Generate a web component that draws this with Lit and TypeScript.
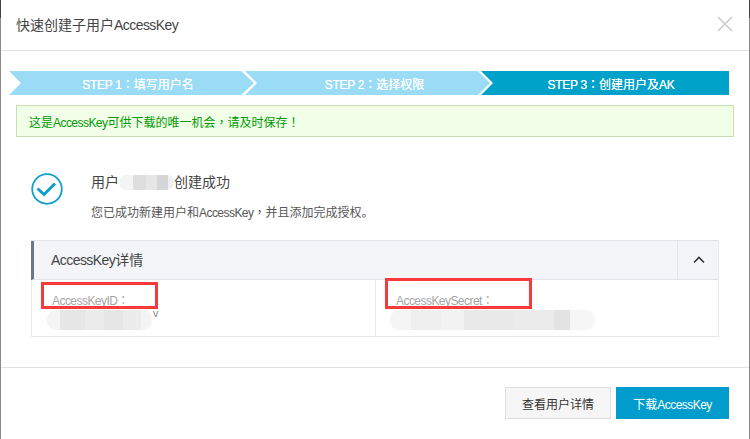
import { LitElement, html, css } from "lit";
import { customElement } from "lit/decorators.js";

@customElement("app-root")
export class AppRoot extends LitElement {
  static styles = css`
    :host {
      display: block;
      width: 750px;
      height: 439px;
      overflow: hidden;
      font-family: "Liberation Sans", "Noto Sans CJK SC", sans-serif;
      text-spacing-trim: space-all;
      color: #333;
      background: #fff;
    }
    .l { letter-spacing: -0.55px; }
    .c { font-family: "Noto Sans CJK TC", sans-serif; }
    .dialog {
      box-sizing: border-box;
      width: 750px;
      height: 439px;
      border-left: 1px solid #8a8a8a;
      border-right: 1px solid #8a8a8a;
      display: flex;
      flex-direction: column;
      background: #fff;
      position: relative;
    }
    .dialog::before, .dialog::after {
      content: "";
      position: absolute;
      top: 0;
      width: 1px;
      height: 18px;
      background: #444;
    }
    .dialog::before { left: -1px; }
    .dialog::after { right: -1px; }
    .head {
      height: 51px;
      flex: none;
      box-sizing: border-box;
      border-bottom: 1px solid #e1e1e1;
      display: flex;
      align-items: center;
      justify-content: space-between;
      padding: 0 15px 2px;
      font-size: 14px;
      color: #444;
    }
    .head svg { display: block; margin: 0 1px 0 0; }
    .body {
      flex: 1;
      padding: 20px 15px 0 8px;
      display: flex;
      flex-direction: column;
      min-height: 0;
    }
    .steps {
      display: flex;
      width: 720px;
      height: 24px;
      flex: none;
    }
    .step {
      box-sizing: border-box;
      height: 24px;
      flex: none;
      display: flex;
      align-items: center;
      justify-content: center;
      color: #fff;
      font-size: 12px;
      text-shadow: 0 0 0.6px #fff;
      background: #9adcf5;
    }
    .s1 { width: 245px; padding-left: 13px; clip-path: polygon(0 0, 232px 0, 245px 50%, 232px 100%, 0 100%, 12px 50%); }
    .s2 { width: 245px; padding-left: 14px; margin-left: -9px; clip-path: polygon(0 0, 233px 0, 245px 50%, 233px 100%, 0 100%, 12px 50%); }
    .s3 { width: 248px; padding-left: 12px; margin-left: -9px; background: #00a2ca; clip-path: polygon(0 0, 100% 0, 100% 100%, 0 100%, 12px 50%); }
    .step .l { letter-spacing: -0.3px; }
    .alert {
      box-sizing: border-box;
      margin: 10px 0 0 7px;
      width: 718px;
      height: 32px;
      flex: none;
      border: 1px solid #c8dfb4;
      background: #f1ffe9;
      color: #009a00;
      font-size: 12px;
      display: flex;
      align-items: center;
      padding-left: 12px;
    }
    .ok {
      margin: 36px 0 0 22px;
      display: flex;
      gap: 28px;
      height: 67px;
      flex: none;
    }
    .ok svg { display: block; }
    .ok-title {
      font-size: 14px;
      line-height: 20px;
      color: #444;
      display: flex;
      align-items: center;
      margin-top: -1px;
    }
    .blur1 {
      width: 55px;
      height: 15px;
      margin-top: 1px;
      border-radius: 7px;
      background: linear-gradient(90deg, #f4f4f4 0 25%, #dedede 25% 50%, #e6e6e6 50% 70%, #d6d6d6 70% 90%, #f0f0f0 90%);
    }
    .ok-sub { font-size: 12px; color: #555; margin-top: 12px; line-height: 16px; }
    .panel {
      box-sizing: border-box;
      margin-left: 22px;
      width: 688px;
      height: 97px;
      flex: none;
      border: 1px solid #e6e8ec;
      border-top: 1px solid #e1e4ea;
    }
    .p-head {
      height: 39px;
      box-sizing: border-box;
      background: #f3f5f9;
      border-left: 3px solid #6b7686;
      border-bottom: 1px solid #e1e4ea;
      margin-left: -1px;
      display: flex;
      align-items: center;
      justify-content: space-between;
      font-size: 14px;
      color: #444;
      padding-left: 17px;
    }
    .p-title { margin-bottom: 2px; }
    .toggle {
      width: 40px;
      height: 100%;
      border-left: 1px solid #e1e4ea;
      display: flex;
      align-items: center;
      justify-content: center;
    }
    .toggle svg { margin-left: 1px; }
    .cols { display: grid; grid-template-columns: 343px 1fr; height: 56px; }
    .col { padding: 12px 0 0 20px; position: relative; font-size: 12px; color: #a4a4a4; line-height: 16px; }
    .col + .col { border-left: 1px solid #e6e8ec; }
    .mark {
      position: absolute;
      box-sizing: border-box;
      left: 9px;
      border: 3px solid #f93a3a;
    }
    .a .mark { top: 2px; width: 117px; height: 27px; }
    .b .mark { top: -2px; width: 147px; height: 31px; }
    .smear {
      position: absolute;
      border-radius: 9px;
      height: 20px;
      top: 30px;
    }
    .a .smear { left: 15px; width: 105px; background: linear-gradient(90deg, #f4f4f4 0 12%, #e6e6e6 12% 36%, #ebebeb 36% 54%, #e6e6e6 54% 72%, #ececec 72% 90%, #f4f4f4 90%); }
    .b .smear { left: 14px; width: 205px; background: linear-gradient(90deg, #f5f5f5 0 10%, #efefef 10% 25%, #f2f2f2 25% 36%, #e9e9e9 36% 60%, #ebebeb 60% 80%, #e3e3e3 80% 88%, #f6f6f6 88%); }
    .tail { position: absolute; left: 121px; top: 25px; font-size: 11px; color: #888; }
    .foot {
      margin: 30px -15px 0 -8px;
      flex: 1;
      border-top: 1px solid #e1e1e1;
      display: flex;
      justify-content: flex-end;
      gap: 5px;
      padding: 19px 20px 0 0;
    }
    .btn {
      box-sizing: border-box;
      height: 32px;
      font-family: inherit;
      font-size: 12px;
      padding: 0;
      border-radius: 0;
    }
    .ghost { width: 106px; background: #f6f6f6; border: 1px solid #ddd; color: #333; }
    .primary { width: 113px; background: #009dcc; border: none; color: #fff; }
  `;

  render() {
    return html`
      <div class="dialog">
        <div class="head">
          <span>快速创建子用户<span class="l">AccessKey</span></span>
          <svg width="16" height="16" viewBox="0 0 16 16"><path d="M1 1L15 15M15 1L1 15" stroke="#ccc" stroke-width="1.6" fill="none"/></svg>
        </div>
        <div class="body">
          <div class="steps">
            <div class="step s1"><span><span class="l">STEP 1</span><span class="c">：</span>填写用户名</span></div>
            <div class="step s2"><span><span class="l">STEP 2</span><span class="c">：</span>选择权限</span></div>
            <div class="step s3"><span><span class="l">STEP 3</span><span class="c">：</span>创建用户及<span class="l">AK</span></span></div>
          </div>
          <div class="alert"><span>这是<span class="l">AccessKey</span>可供下载的唯一机会<span class="c">，</span>请及时保存<span class="c">！</span></span></div>
          <div class="ok">
            <svg width="32" height="32" viewBox="0 0 32 32">
              <circle cx="16" cy="16" r="14.8" fill="none" stroke="#0f9fcb" stroke-width="1.8"/>
              <path d="M6.5 15.5L13 21.5L24 10.5" fill="none" stroke="#0f9fcb" stroke-width="3"/>
            </svg>
            <div>
              <div class="ok-title">用户<span class="blur1"></span>创建成功</div>
              <div class="ok-sub">您已成功新建用户和<span class="l">AccessKey</span><span class="c">，</span>并且添加完成授权。</div>
            </div>
          </div>
          <div class="panel">
            <div class="p-head">
              <span class="p-title"><span class="l">AccessKey</span>详情</span>
              <div class="toggle">
                <svg width="12" height="8" viewBox="0 0 12 8"><path d="M1 6.5L6 1.5L11 6.5" fill="none" stroke="#333" stroke-width="1.6"/></svg>
              </div>
            </div>
            <div class="cols">
              <div class="col a"><span class="l">AccessKeyID</span><span class="c">：</span><span class="mark"></span><span class="smear"></span><span class="tail">v</span></div>
              <div class="col b"><span class="l">AccessKeySecret</span><span class="c">：</span><span class="mark"></span><span class="smear"></span></div>
            </div>
          </div>
          <div class="foot">
            <button class="btn ghost">查看用户详情</button>
            <button class="btn primary">下载<span class="l">AccessKey</span></button>
          </div>
        </div>
      </div>
    `;
  }
}
